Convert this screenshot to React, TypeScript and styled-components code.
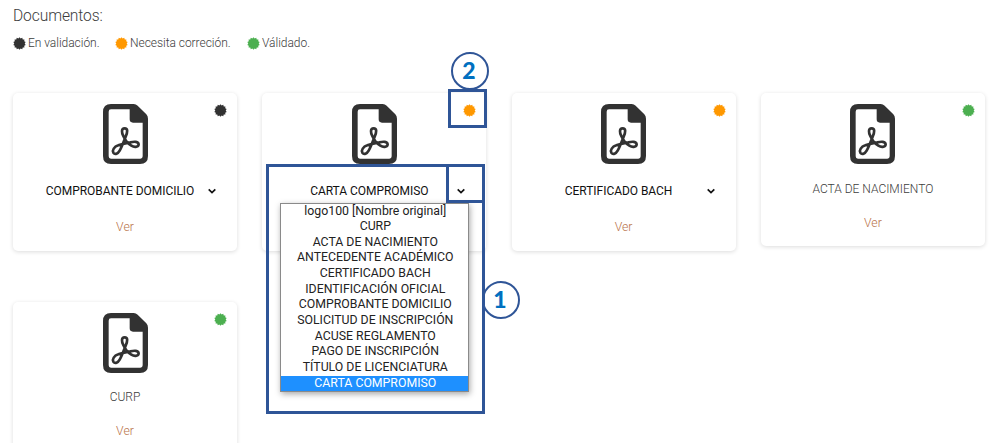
import React from 'react';
import styled, { createGlobalStyle, css } from 'styled-components';

const GlobalStyle = createGlobalStyle`
  *, *::before, *::after { box-sizing: border-box; }
  html, body { margin: 0; padding: 0; background: #fff; overflow: hidden; }
  body { font-family: Roboto, "Liberation Sans", sans-serif; }
`;

const NAVY = '#2f5597';
const DARK = '#323232';
const ORANGE = '#ff9800';
const GREEN = '#4caf50';

const Page = styled.main`
  position: relative;
  width: 996px;
  height: 443px;
  padding: 6px 10px 0 13px;
  overflow: hidden;
`;

const Heading = styled.h1`
  margin: 0;
  font-size: 15.6px;
  font-weight: 300;
  line-height: 20px;
  color: #3c3c3c;
  letter-spacing: -0.1px;
`;

const Legend = styled.div`
  display: flex;
  height: 17px;
  margin-top: 8.5px;
`;

const LegendItem = styled.div<{ $width: number }>`
  display: flex;
  align-items: center;
  gap: 2px;
  width: ${(p) => p.$width}px;
  font-size: 12px;
  font-weight: 300;
  line-height: 17px;
  color: #3c3c3c;
  white-space: nowrap;
  letter-spacing: -0.04px;
`;

const Grid = styled.section`
  display: grid;
  grid-template-columns: repeat(4, 224px);
  column-gap: 25.3px;
  row-gap: 51.3px;
  align-items: start;
  margin-top: 41.5px;
`;

const Card = styled.article<{ $tall?: boolean }>`
  position: relative;
  display: flex;
  flex-direction: column;
  align-items: center;
  height: ${(p) => (p.$tall ? 157.5 : 152.5)}px;
  padding-top: 11px;
  border-radius: 5px;
  background: #fff;
  box-shadow: 0 1px 4px rgba(0, 0, 0, 0.14);
`;

const Badge = styled.span`
  position: absolute;
  top: 11px;
  right: 10px;
  display: flex;
`;

const nameText = css`
  font-size: 12px;
  line-height: 16px;
  white-space: nowrap;
`;

const Title = styled.div`
  ${nameText}
  margin-top: 16.5px;
  font-weight: 300;
  color: #3c3c3c;
`;

const Select = styled.div`
  ${nameText}
  display: flex;
  align-items: center;
  width: 184px;
  margin-top: 19px;
  color: #111;
  letter-spacing: -0.04px;
`;

const SelectLabel = styled.span`
  width: 174px;
  text-align: center;
`;

const ViewLink = styled.a<{ $gap: number }>`
  margin-top: ${(p) => p.$gap}px;
  font-size: 12.3px;
  font-weight: 300;
  line-height: 16px;
  color: #b9734a;
`;

const Menu = styled.ul`
  position: absolute;
  z-index: 2;
  top: 109.5px;
  left: 18px;
  width: 189px;
  margin: 0;
  padding: 0;
  list-style: none;
  border: 1px solid #8a8a8a;
  background: #fff;
  box-shadow: 1px 2px 6px rgba(0, 0, 0, 0.35);
`;

const Option = styled.li<{ $active: boolean }>`
  height: 15.65px;
  padding-left: 1px;
  font-size: 12.3px;
  line-height: 15.65px;
  text-align: center;
  white-space: nowrap;
  color: ${(p) => (p.$active ? '#fff' : '#222')};
  background: ${(p) => (p.$active ? '#1e90ff' : 'transparent')};
`;

interface Area { $x: number; $y: number; $w: number; $h: number; }

const Highlight = styled.div<Area>`
  position: absolute;
  z-index: 3;
  left: ${(p) => p.$x}px;
  top: ${(p) => p.$y}px;
  width: ${(p) => p.$w}px;
  height: ${(p) => p.$h}px;
  border: 3px solid ${NAVY};
`;

const Callout = styled.div<{ $x: number; $y: number }>`
  position: absolute;
  z-index: 2;
  left: ${(p) => p.$x}px;
  top: ${(p) => p.$y}px;
  display: flex;
  align-items: center;
  justify-content: center;
  width: 38px;
  height: 38px;
  padding: 0 2px 1px 0;
  border: 2px solid ${NAVY};
  border-radius: 50%;
  background: #fff;
  font-family: Lato, sans-serif;
  font-size: 23px;
  font-weight: 900;
  line-height: 1;
  color: #0070c0;
`;

const sealPoints = Array.from({ length: 28 }, (_, i) => {
  const r = i % 2 === 0 ? 6.8 : 5.6;
  const a = (i * Math.PI) / 14;
  return `${(7 + r * Math.sin(a)).toFixed(2)},${(7 - r * Math.cos(a)).toFixed(2)}`;
}).join(' ');

const Seal = ({ color }: { color: string }) => (
  <svg width="13" height="13" viewBox="0 0 14 14">
    <polygon points={sealPoints} fill={color} />
  </svg>
);

const PdfIcon = () => (
  <svg width="45" height="60" viewBox="0 0 135 180">
    <path
      fill={DARK}
      fillRule="evenodd"
      d="M24 0H92Q99 0 104 5L130 31Q135 36 135 44V156Q135 180 111 180H24Q0 180 0 156V24Q0 0 24 0ZM24 16Q17 16 17 23V157Q17 164 24 164H112Q119 164 119 157V56H90Q80 56 80 46V16Z"
    />
    <path
      fill="none"
      stroke={DARK}
      strokeWidth="8"
      strokeLinejoin="round"
      d="M65 73C54 73 56 87 61 96C66 108 75 119 85 125C96 132 107 128 107 121C106 112 94 112 82 115C69 117 57 120 46 124C33 128 27 139 31 146C36 153 45 149 50 140C56 129 62 113 68 98C74 84 75 73 65 73Z"
    />
  </svg>
);

const Chevron = () => (
  <svg width="10" height="8" viewBox="0 0 10 8">
    <path d="M1.7 2.4L5 5.6L8.3 2.4" fill="none" stroke="#111" strokeWidth="1.7" />
  </svg>
);

const documents = [
  { name: 'COMPROBANTE DOMICILIO', color: DARK, editable: true },
  { name: 'CARTA COMPROMISO', color: ORANGE, editable: true, open: true },
  { name: 'CERTIFICADO BACH', color: ORANGE, editable: true },
  { name: 'ACTA DE NACIMIENTO', color: GREEN, editable: false },
  { name: 'CURP', color: GREEN, editable: false },
];

const options = [
  'logo100 [Nombre original]',
  'CURP',
  'ACTA DE NACIMIENTO',
  'ANTECEDENTE ACADÉMICO',
  'CERTIFICADO BACH',
  'IDENTIFICACIÓN OFICIAL',
  'COMPROBANTE DOMICILIO',
  'SOLICITUD DE INSCRIPCIÓN',
  'ACUSE REGLAMENTO',
  'PAGO DE INSCRIPCIÓN',
  'TÍTULO DE LICENCIATURA',
  'CARTA COMPROMISO',
];

export default function App() {
  return (
    <>
      <GlobalStyle />
      <Page>
        <Heading>Documentos:</Heading>
        <Legend>
          <LegendItem $width={102}><Seal color={DARK} />En validación.</LegendItem>
          <LegendItem $width={132}><Seal color={ORANGE} />Necesita correción.</LegendItem>
          <LegendItem $width={70}><Seal color={GREEN} />Válidado.</LegendItem>
        </Legend>
        <Grid>
          {documents.map((doc) => (
            <Card key={doc.name} $tall={doc.editable}>
              <Badge><Seal color={doc.color} /></Badge>
              <PdfIcon />
              {doc.editable ? (
                <Select><SelectLabel>{doc.name}</SelectLabel><Chevron /></Select>
              ) : (
                <Title>{doc.name}</Title>
              )}
              {!doc.open && <ViewLink $gap={doc.editable ? 20 : 18}>Ver</ViewLink>}
              {doc.open && (
                <Menu>
                  {options.map((option) => (
                    <Option key={option} $active={option === doc.name}>{option}</Option>
                  ))}
                </Menu>
              )}
            </Card>
          ))}
        </Grid>
        <Callout $x={451} $y={52}>2</Callout>
        <Callout $x={482} $y={281}>1</Callout>
        <Highlight $x={448} $y={89} $w={39} $h={39} />
        <Highlight $x={266} $y={164} $w={219} $h={250} />
        <Highlight $x={446} $y={164} $w={39} $h={39} />
      </Page>
    </>
  );
}
